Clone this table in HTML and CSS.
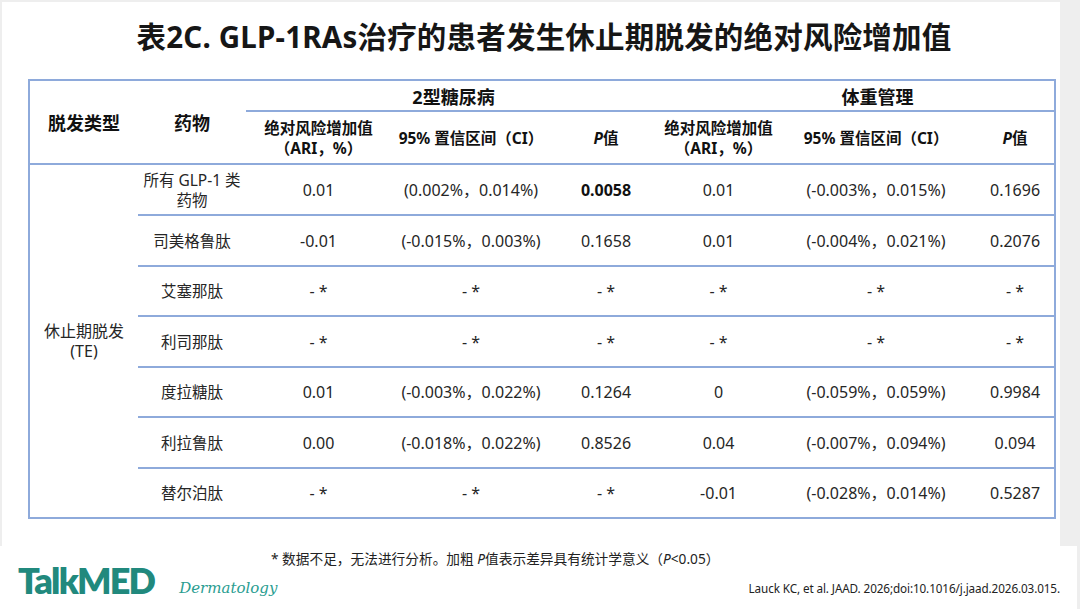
FILE: index.html
```html
<!DOCTYPE html>
<html lang="zh-CN">
<head>
<meta charset="utf-8">
<title>表2C</title>
<link rel="stylesheet" href="styles.css">
</head>
<body>
<div class="page">
  <div class="slide">
    <h1 class="title">表2C. GLP-1RAs治疗的患者发生休止期脱发的绝对风险增加值</h1>
    <table class="data">
      <colgroup>
        <col class="c1"><col class="c2"><col class="c3"><col class="c4"><col class="c5"><col class="c6"><col class="c7"><col class="c8">
      </colgroup>
      <thead>
        <tr class="h1">
          <th rowspan="2" class="corner">脱发类型</th>
          <th rowspan="2" class="corner">药物</th>
          <th colspan="3" class="group">2型糖尿病</th>
          <th colspan="3" class="group g2">体重管理</th>
        </tr>
        <tr class="h2">
          <th class="sub">绝对风险增加值<br>（ARI，%）</th>
          <th class="sub">95% 置信区间（CI）</th>
          <th class="sub"><i>P</i>值</th>
          <th class="sub">绝对风险增加值<br>（ARI，%）</th>
          <th class="sub">95% 置信区间（CI）</th>
          <th class="sub"><i>P</i>值</th>
        </tr>
      </thead>
      <tbody>
        <tr class="r51">
          <td rowspan="7" class="type">休止期脱发<br>(TE)</td>
          <td class="drug">所有 GLP-1 类<br>药物</td>
          <td>0.01</td><td>(0.002%，0.014%)</td><td><b>0.0058</b></td>
          <td>0.01</td><td>(-0.003%，0.015%)</td><td>0.1696</td>
        </tr>
        <tr class="r51">
          <td class="drug">司美格鲁肽</td>
          <td>-0.01</td><td>(-0.015%，0.003%)</td><td>0.1658</td>
          <td>0.01</td><td>(-0.004%，0.021%)</td><td>0.2076</td>
        </tr>
        <tr class="r50">
          <td class="drug">艾塞那肽</td>
          <td>- *</td><td>- *</td><td>- *</td>
          <td>- *</td><td>- *</td><td>- *</td>
        </tr>
        <tr class="r51">
          <td class="drug">利司那肽</td>
          <td>- *</td><td>- *</td><td>- *</td>
          <td>- *</td><td>- *</td><td>- *</td>
        </tr>
        <tr class="r50">
          <td class="drug">度拉糖肽</td>
          <td>0.01</td><td>(-0.003%，0.022%)</td><td>0.1264</td>
          <td>0</td><td>(-0.059%，0.059%)</td><td>0.9984</td>
        </tr>
        <tr class="r51">
          <td class="drug">利拉鲁肽</td>
          <td>0.00</td><td>(-0.018%，0.022%)</td><td>0.8526</td>
          <td>0.04</td><td>(-0.007%，0.094%)</td><td>0.094</td>
        </tr>
        <tr class="r50">
          <td class="drug">替尔泊肽</td>
          <td>- *</td><td>- *</td><td>- *</td>
          <td>-0.01</td><td>(-0.028%，0.014%)</td><td>0.5287</td>
        </tr>
      </tbody>
    </table>
  </div>
  <div class="footer">
    <p class="note">* 数据不足，无法进行分析。加粗 <i>P</i>值表示差异具有统计学意义（<i>P</i>&lt;0.05）</p>
    <div class="brand">
      <span class="logo">TalkMED</span>
      <span class="derm">Dermatology</span>
      <span class="ref">Lauck KC, et al. JAAD. 2026;doi:10.1016/j.jaad.2026.03.015.</span>
    </div>
  </div>
</div>
</body>
</html>
```

FILE: styles.css
```css
* { box-sizing: border-box; }
html, body { margin: 0; padding: 0; }
body {
  width: 1080px;
  height: 609px;
  overflow: hidden;
  font-family: "Noto Sans", "Noto Sans CJK SC", sans-serif;
  color: #222;
}
.page {
  width: 1080px;
  height: 609px;
  background: #eeeeee;
  padding-top: 2px;
}
.slide {
  width: 1058px;
  height: 544px;
  margin-left: 2px;
  background: #ffffff;
  padding-left: 26px;
}
.title {
  margin: 0;
  height: 77px;
  line-height: 70px;
  text-align: center;
  font-size: 29.5px;
  font-weight: 700;
  color: #161616;
  letter-spacing: 0.2px;
}
.data {
  border-collapse: collapse;
  table-layout: fixed;
  width: 1026px;
  border: 2px solid #8eaadb;
}
.c1 { width: 109px; }
.c2 { width: 108px; }
.c3 { width: 145px; }
.c4 { width: 160px; }
.c5 { width: 110px; }
.c6 { width: 115px; }
.c7 { width: 200px; }
.c8 { width: 79px; }
.data th, .data td {
  padding: 0;
  text-align: center;
  vertical-align: middle;
}
.data th {
  font-weight: 700;
  color: #111;
}
.corner {
  font-size: 18px;
  border-bottom: 2px solid #8eaadb;
}
.group {
  font-size: 18px;
  border-bottom: 2px solid #8eaadb;
}
.g2 { padding-left: 40px !important; }
.h1 { height: 31px; }
.h2 { height: 53px; }
.sub {
  font-size: 15.5px;
  line-height: 20px;
  border-bottom: 2px solid #8eaadb;
}
.data td {
  font-size: 16px;
  line-height: 20px;
  color: #262626;
  border-bottom: 2px solid #8eaadb;
}
.data td.drug { font-size: 15.5px; }
.data td.type {
  border-bottom: none;
  line-height: 20px;
}
.data td b { font-weight: 700; color: #111; }
.r51 { height: 51px; }
.r50 { height: 50px; }
.footer {
  width: 1077px;
  height: 63px;
  background: #ffffff;
}
.note {
  margin: 0;
  padding: 4px 0 0 271px;
  font-size: 13.7px;
  line-height: 17px;
  color: #222;
}
.brand {
  display: flex;
  align-items: baseline;
  padding-left: 18px;
  margin-top: -6px;
}
.logo {
  font-family: "Lato", "Noto Sans", sans-serif;
  font-weight: 800;
  font-size: 36px;
  line-height: 38px;
  letter-spacing: -1.8px;
  color: #21897d;
}
.derm {
  margin-left: 25px;
  font-family: "DejaVu Serif", serif;
  font-style: italic;
  font-size: 15px;
  color: #2a9d91;
  position: relative;
  top: -1px;
}
.ref {
  margin-left: auto;
  padding-right: 17px;
  font-size: 11.7px;
  color: #222;
  letter-spacing: -0.1px;
  position: relative;
  top: -1px;
}
```
